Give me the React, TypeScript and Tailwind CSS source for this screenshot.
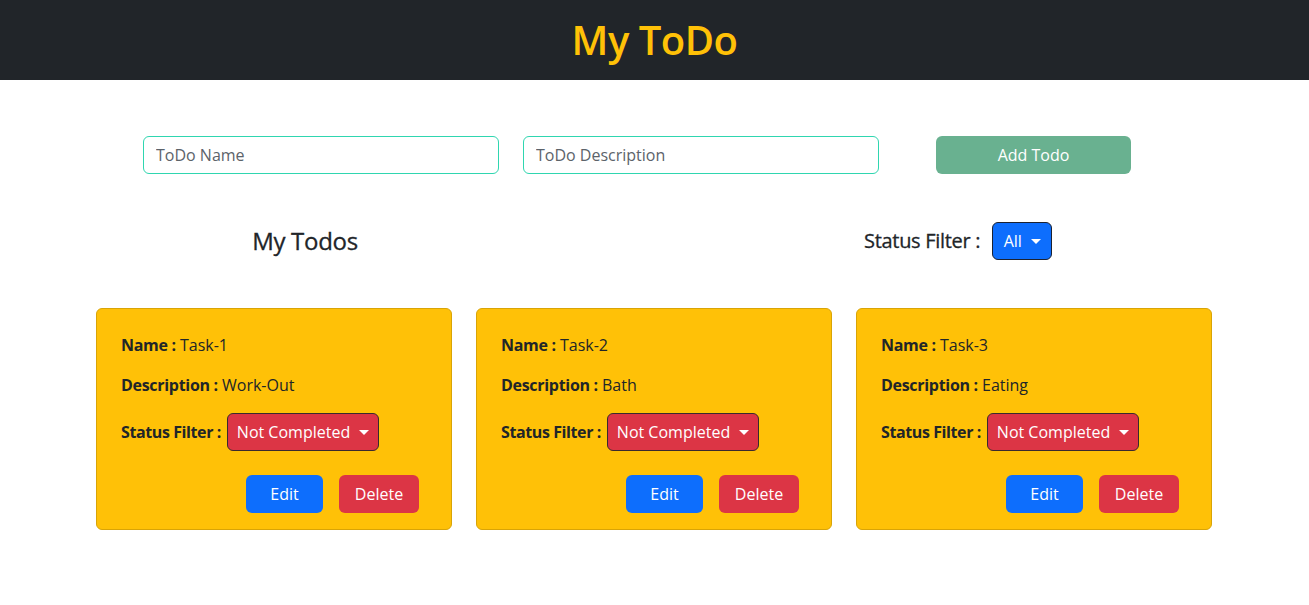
import { useState } from 'react';

interface Todo {
  id: number;
  name: string;
  description: string;
  status: string;
}

const initialTodos: Todo[] = [
  { id: 1, name: 'Task-1', description: 'Work-Out', status: 'Not Completed' },
  { id: 2, name: 'Task-2', description: 'Bath', status: 'Not Completed' },
  { id: 3, name: 'Task-3', description: 'Eating', status: 'Not Completed' },
];

function Caret() {
  return (
    <span className="ml-[9px] inline-block h-0 w-0 border-t-[5px] border-l-[5px] border-r-[5px] border-t-white border-l-transparent border-r-transparent align-middle" />
  );
}

function TodoCard({ todo }: { todo: Todo }) {
  return (
    <div className="flex h-[222px] w-[356px] flex-col rounded-md border border-[#d9a406] bg-[#ffc107] px-6 pt-6 pb-4 text-[#212529]">
      <p className="mb-4 leading-6">
        <span className="font-bold tracking-[-0.3px]">Name :</span> {todo.name}
      </p>
      <p className="mb-4 leading-6">
        <span className="font-bold tracking-[-0.3px]">Description :</span> {todo.description}
      </p>
      <div className="flex items-center">
        <span className="w-[106px] whitespace-nowrap font-bold tracking-[-0.4px]">Status Filter :</span>
        <button className="flex h-[38px] w-[152px] items-center justify-center rounded-md border border-[#3a2a2e] bg-[#dc3545] text-white">
          {todo.status}
          <Caret />
        </button>
      </div>
      <div className="mt-6 flex justify-end gap-4 pr-2">
        <button className="h-[38px] w-[77px] rounded-md bg-[#0d6efd] text-white">Edit</button>
        <button className="h-[38px] w-[80px] rounded-md bg-[#dc3545] text-white">Delete</button>
      </div>
    </div>
  );
}

export default function App() {
  const [todos] = useState<Todo[]>(initialTodos);
  const [name, setName] = useState('');
  const [description, setDescription] = useState('');

  return (
    <div className="min-h-screen bg-white text-base text-[#212529]" style={{ fontFamily: '"Open Sans", "Noto Sans", sans-serif' }}>
      <header className="flex h-20 items-center justify-center bg-[#212529]">
        <h1 className="text-[40px] font-semibold leading-tight tracking-[-0.5px] text-[#ffc107]">My ToDo</h1>
      </header>

      <div className="mt-14 flex items-center pl-[143px]">
        <input
          value={name}
          onChange={(e) => setName(e.target.value)}
          placeholder="ToDo Name"
          className="h-[38px] w-[356px] rounded-md border border-[#2fd6b0] px-3 text-base placeholder:text-[#5c636a] outline-none"
        />
        <input
          value={description}
          onChange={(e) => setDescription(e.target.value)}
          placeholder="ToDo Description"
          className="ml-6 h-[38px] w-[356px] rounded-md border border-[#2fd6b0] px-3 text-base placeholder:text-[#5c636a] outline-none"
        />
        <button className="ml-[57px] h-[38px] w-[195px] rounded-md bg-[#69b190] text-white">Add Todo</button>
      </div>

      <div className="mt-12 flex items-center">
        <div className="ml-[96px] w-[418px] text-center">
          <h3 className="text-2xl font-medium tracking-[-0.3px] [-webkit-text-stroke:0.3px_#212529]">My Todos</h3>
        </div>
        <div className="ml-[350px] flex items-center gap-3">
          <span className="text-xl font-medium tracking-[-0.3px] [-webkit-text-stroke:0.3px_#212529]">Status Filter :</span>
          <button className="flex h-[38px] w-[60px] items-center justify-center rounded-md border border-[#1c2230] bg-[#0d6efd] text-white">
            All
            <Caret />
          </button>
        </div>
      </div>

      <div className="mt-12 flex gap-6 pl-[96px]">
        {todos.map((todo) => (
          <TodoCard key={todo.id} todo={todo} />
        ))}
      </div>
    </div>
  );
}
